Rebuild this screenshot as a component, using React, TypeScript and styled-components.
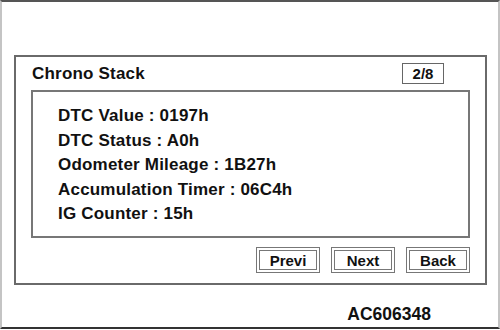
import styled, { createGlobalStyle } from 'styled-components'

const GlobalStyle = createGlobalStyle`
    html, body {
        margin: 0;
        padding: 0;
        background: #fff;
    }
    body {
        font-family: "Liberation Sans", Arial, sans-serif;
        color: #111;
    }
`

const Frame = styled.div`
    width: 500px;
    height: 329px;
    box-sizing: border-box;
    border-top: 2px solid #555;
    border-left: 2px solid #c4c4c4;
    border-right: 2px solid #c4c4c4;
    border-bottom: 2px solid #333;
    display: flex;
    flex-direction: column;
`

const Panel = styled.div`
    width: 473px;
    height: 230px;
    margin: 53px 0 0 12px;
    box-sizing: border-box;
    border: 2px solid #6a6a6a;
    padding: 0 15px;
    display: flex;
    flex-direction: column;
`

const Header = styled.div`
    height: 33px;
    display: flex;
    align-items: center;
    justify-content: space-between;
    padding: 0 26px 0 1px;
`

const Title = styled.div`
    font-size: 17px;
    font-weight: bold;
    letter-spacing: 0.2px;
`

const PageCount = styled.div`
    width: 42px;
    height: 21px;
    box-sizing: border-box;
    border: 1px solid #666;
    display: flex;
    align-items: center;
    justify-content: center;
    font-size: 15px;
    font-weight: bold;
`

const InfoBox = styled.div`
    height: 148px;
    box-sizing: border-box;
    border: 2px solid #777;
    padding: 12px 0 0 25px;
`

const InfoRow = styled.div`
    font-size: 17px;
    font-weight: bold;
    letter-spacing: 0.2px;
    line-height: 24.5px;
    white-space: nowrap;
`

const ButtonRow = styled.div`
    display: flex;
    justify-content: flex-end;
    gap: 11px;
    margin-top: 9px;
`

const Button = styled.div`
    width: 64px;
    height: 26px;
    box-sizing: border-box;
    border: 1px solid #777;
    padding: 2px;
    display: flex;
`

const ButtonFace = styled.div`
    flex: 1;
    border: 1px solid #777;
    display: flex;
    align-items: center;
    justify-content: center;
    font-size: 15px;
    font-weight: bold;
`

const Footer = styled.div`
    margin-top: 19px;
    padding-right: 67px;
    display: flex;
    justify-content: flex-end;
    font-size: 17.5px;
    font-weight: bold;
    line-height: 20px;
`

const rows = [
    'DTC Value : 0197h',
    'DTC Status : A0h',
    'Odometer Mileage : 1B27h',
    'Accumulation Timer : 06C4h',
    'IG Counter : 15h',
]

const buttons = ['Previ', 'Next', 'Back']

export default function App() {
    return (
        <>
            <GlobalStyle />
            <Frame>
                <Panel>
                    <Header>
                        <Title>Chrono Stack</Title>
                        <PageCount>2/8</PageCount>
                    </Header>
                    <InfoBox>
                        {rows.map((r) => (
                            <InfoRow key={r}>{r}</InfoRow>
                        ))}
                    </InfoBox>
                    <ButtonRow>
                        {buttons.map((b) => (
                            <Button key={b}>
                                <ButtonFace>{b}</ButtonFace>
                            </Button>
                        ))}
                    </ButtonRow>
                </Panel>
                <Footer>AC606348</Footer>
            </Frame>
        </>
    )
}
